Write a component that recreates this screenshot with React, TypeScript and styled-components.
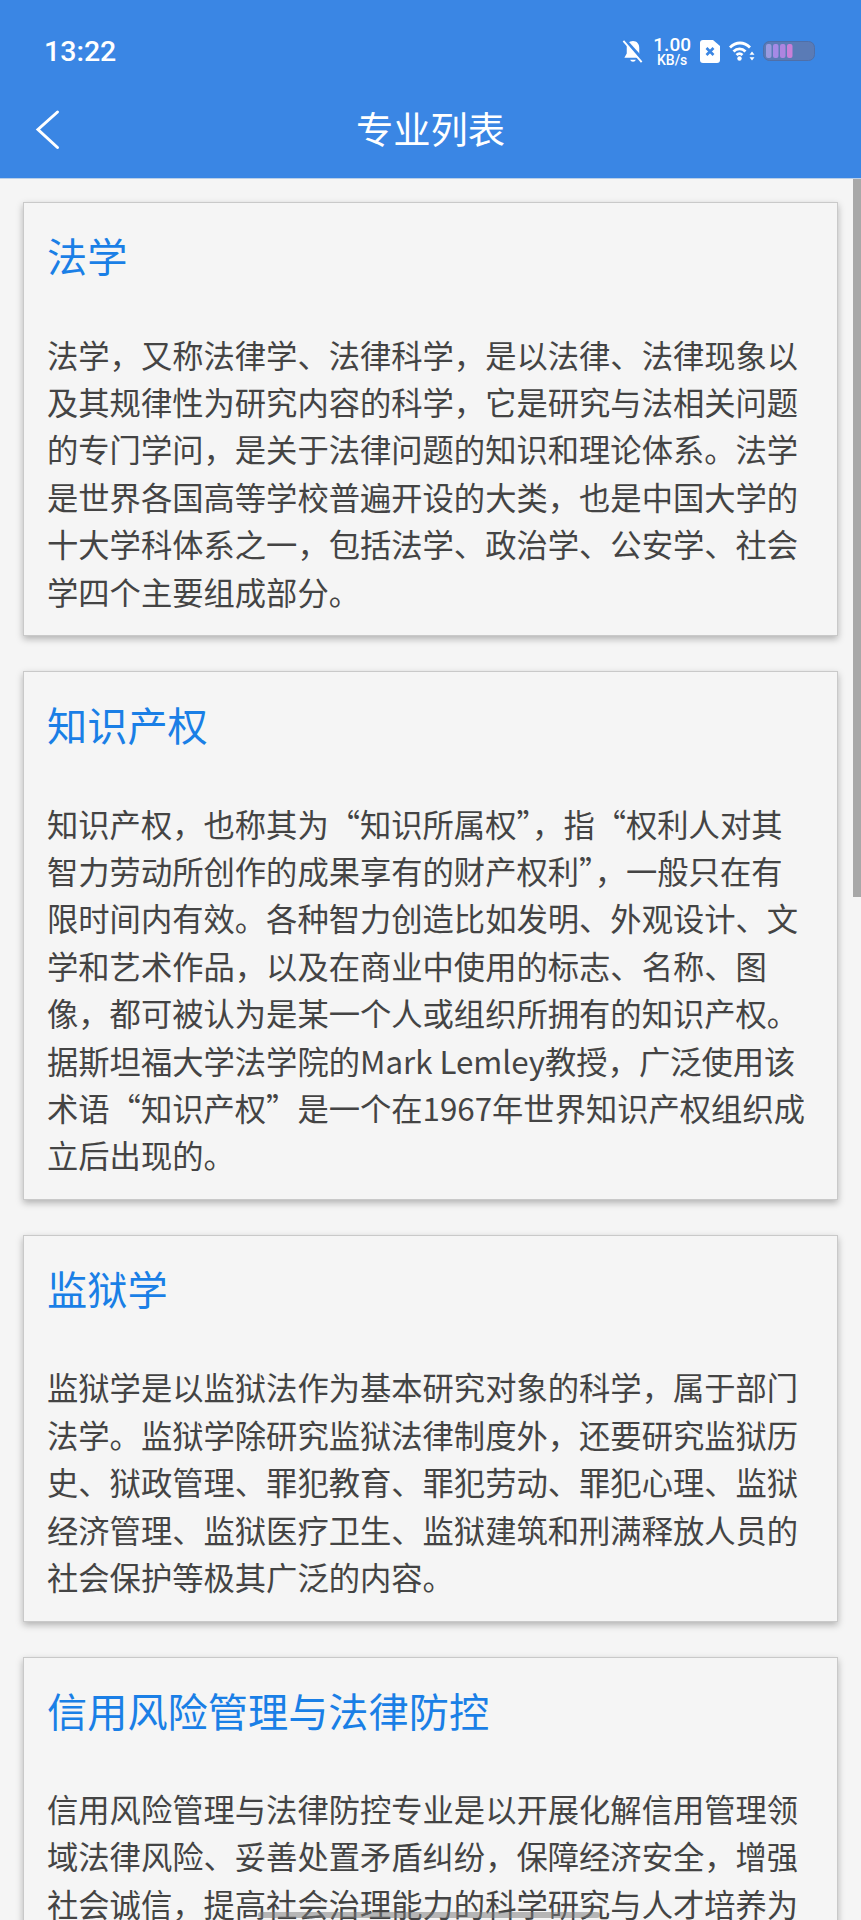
import React from "react";
import styled, { createGlobalStyle } from "styled-components";

const GlobalStyle = createGlobalStyle`
  html, body {
    margin: 0;
    padding: 0;
    background: #f5f5f5;
  }
  * {
    box-sizing: border-box;
  }
`;

const Page = styled.div`
  position: relative;
  width: 861px;
  height: 1920px;
  overflow: hidden;
  background: #f5f5f5;
  font-family: "Noto Sans CJK SC", "Noto Sans", sans-serif;
`;

const Header = styled.header`
  height: 179px;
  background: #3a86e4;
  color: #fff;
  border-bottom: 1px solid #b9cfe8;
`;

const StatusBar = styled.div`
  height: 100px;
  padding: 2px 46px 0 44px;
  display: flex;
  align-items: center;
  justify-content: space-between;
`;

const Clock = styled.span`
  font-family: Roboto, "Noto Sans", sans-serif;
  font-size: 28.5px;
  font-weight: 500;
`;

const StatusIcons = styled.div`
  display: flex;
  align-items: center;
  gap: 8px;
`;

const Speed = styled.div`
  display: flex;
  flex-direction: column;
  align-items: center;
  gap: 1px;
  font-family: Roboto, "Noto Sans", sans-serif;
  font-weight: 500;
  line-height: 1;
  margin: 0 1px;
`;

const SpeedValue = styled.span`
  font-size: 19px;
  line-height: 16px;
`;

const SpeedUnit = styled.span`
  font-size: 14px;
  line-height: 12px;
`;

const NavBar = styled.div`
  position: relative;
  height: 60px;
  padding-bottom: 4px;
  display: flex;
  align-items: center;
  justify-content: center;
`;

const BackButton = styled.svg`
  position: absolute;
  left: 34px;
  top: 9px;
`;

const NavTitle = styled.h1`
  margin: 0;
  font-size: 37.3px;
  font-weight: 400;
  line-height: 56px;
`;

const List = styled.main`
  display: flex;
  flex-direction: column;
  gap: 35px;
  padding: 23px 23px 0;
`;

const Card = styled.section`
  flex: none;
  border: 1px solid #c9c9c9;
  background: #f5f5f5;
  padding: 22px 24px 20.1px 23px;
  box-shadow: 0 3px 7px rgba(0, 0, 0, 0.28);
`;

const CardTitle = styled.h2`
  margin: 0 0 45.5px;
  font-size: 40.2px;
  font-weight: 400;
  line-height: 60px;
  color: #1a7fe6;
`;

const CardText = styled.p`
  margin: 0;
  font-size: 31.3px;
  line-height: 47.4px;
  color: #444;
`;

const Scrollbar = styled.div`
  position: absolute;
  right: 0;
  top: 179px;
  width: 8px;
  height: 718px;
  background: #a8a8a8;
`;

const HomeIndicator = styled.div`
  position: absolute;
  left: 258px;
  bottom: 2px;
  width: 342px;
  height: 6px;
  border-radius: 3px;
  background: rgba(120, 120, 120, 0.5);
`;

const majors = [
  {
    title: "法学",
    text: "法学，又称法律学、法律科学，是以法律、法律现象以及其规律性为研究内容的科学，它是研究与法相关问题的专门学问，是关于法律问题的知识和理论体系。法学是世界各国高等学校普遍开设的大类，也是中国大学的十大学科体系之一，包括法学、政治学、公安学、社会学四个主要组成部分。",
  },
  {
    title: "知识产权",
    text: "知识产权，也称其为“知识所属权”，指“权利人对其智力劳动所创作的成果享有的财产权利”，一般只在有限时间内有效。各种智力创造比如发明、外观设计、文学和艺术作品，以及在商业中使用的标志、名称、图像，都可被认为是某一个人或组织所拥有的知识产权。据斯坦福大学法学院的Mark Lemley教授，广泛使用该术语“知识产权”是一个在1967年世界知识产权组织成立后出现的。",
  },
  {
    title: "监狱学",
    text: "监狱学是以监狱法作为基本研究对象的科学，属于部门法学。监狱学除研究监狱法律制度外，还要研究监狱历史、狱政管理、罪犯教育、罪犯劳动、罪犯心理、监狱经济管理、监狱医疗卫生、监狱建筑和刑满释放人员的社会保护等极其广泛的内容。",
  },
  {
    title: "信用风险管理与法律防控",
    text: "信用风险管理与法律防控专业是以开展化解信用管理领域法律风险、妥善处置矛盾纠纷，保障经济安全，增强社会诚信，提高社会治理能力的科学研究与人才培养为",
  },
];

const BellOff = () => (
  <svg width="22" height="25" viewBox="0 0 22 26">
    <path d="M11 2c-4 0-6.500 3-6.500 7v6L2 19.500h18L17.500 15V9C17.500 5 15 2 11 2z" fill="#fff" />
    <path d="M8 21.500a3.200 3.200 0 0 0 6 0z" fill="#fff" />
    <path d="M2.500 1l20 22" stroke="#3a86e4" strokeWidth="3.500" />
    <path d="M1 2l19 22" stroke="#fff" strokeWidth="2" />
  </svg>
);

const SimIcon = () => (
  <svg width="20" height="23" viewBox="0 0 20 23">
    <path d="M3 0h10l7 6v14a3 3 0 0 1-3 3H3a3 3 0 0 1-3-3V3a3 3 0 0 1 3-3z" fill="#fff" />
    <path d="M6.500 8l7 7m0-7l-7 7" stroke="#3a86e4" strokeWidth="2.600" />
  </svg>
);

const WifiIcon = () => (
  <svg width="27" height="20" viewBox="0 0 27 20">
    <g fill="none" stroke="#fff" strokeWidth="2.800">
      <path d="M1 6.500C7 .5 15 .5 21 6.500" transform="translate(1 0)" />
      <path d="M5.500 10.500c3.500-3.500 8.500-3.500 12 0" />
      <path d="M8.500 14c2-1.800 4-1.800 6 0" />
    </g>
    <circle cx="11.500" cy="17.500" r="2.200" fill="#fff" />
    <path d="M24 10.500l-2.500 3.200h5zM24 19.500l-2.500-3.200h5z" fill="#fff" />
  </svg>
);

const BatteryIcon = () => (
  <svg width="52" height="20" viewBox="0 0 52 20">
    <rect x="0.500" y="0.500" width="51" height="19" rx="6" fill="#5a7bb6" stroke="#4f6fa8" />
    <rect x="3" y="3" width="5.500" height="14" rx="2" fill="#9a9be0" />
    <rect x="10" y="3" width="5.500" height="14" rx="2" fill="#a58ae6" />
    <rect x="17" y="3" width="5.500" height="14" rx="2" fill="#ad85e0" />
    <rect x="24" y="3" width="5.500" height="14" rx="2" fill="#c880d8" />
  </svg>
);

export default function App() {
  return (
    <Page lang="zh-CN">
      <GlobalStyle />
      <Header>
        <StatusBar>
          <Clock>13:22</Clock>
          <StatusIcons>
            <BellOff />
            <Speed>
              <SpeedValue>1.00</SpeedValue>
              <SpeedUnit>KB/s</SpeedUnit>
            </Speed>
            <SimIcon />
            <WifiIcon />
            <BatteryIcon />
          </StatusIcons>
        </StatusBar>
        <NavBar>
          <BackButton width="26" height="42" viewBox="0 0 26 42">
            <path d="M23.500 3L4 20.500l19.500 18" fill="none" stroke="#fff" strokeWidth="3" strokeLinecap="round" />
          </BackButton>
          <NavTitle>专业列表</NavTitle>
        </NavBar>
      </Header>
      <List>
        {majors.map((major) => (
          <Card key={major.title}>
            <CardTitle>{major.title}</CardTitle>
            <CardText>{major.text}</CardText>
          </Card>
        ))}
      </List>
      <Scrollbar />
      <HomeIndicator />
    </Page>
  );
}
